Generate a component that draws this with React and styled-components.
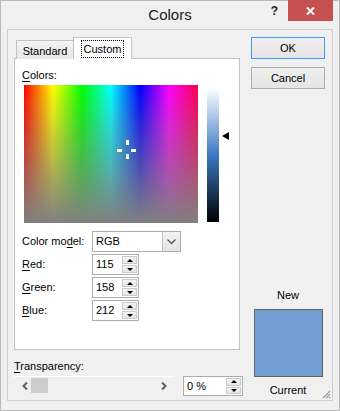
import React from "react";
import styled, {createGlobalStyle} from "styled-components";

const GlobalStyle = createGlobalStyle`
  body {
    margin: 0;
    background: #ffffff;
    font-family: "Liberation Sans", Arial, sans-serif;
    font-size: 11px;
    color: #000;
  }
`

const Window = styled.div`
  width: 340px;
  height: 411px;
  box-sizing: border-box;
  background: #f0f0f0;
  border: 1px solid #b9b9b9;
  display: flex;
  flex-direction: column;
`

const TitleBar = styled.div`
  height: 29px;
  margin-top: -1px;
  display: grid;
  grid-template-columns: 1fr auto 1fr;
  align-items: start;
`

const Title = styled.div`
  grid-column: 2;
  font-size: 15px;
  line-height: 30px;
  color: #1a1a1a;
`

const Controls = styled.div`
  display: flex;
  justify-content: flex-end;
  align-items: flex-start;
  padding-right: 6px;
`

const Help = styled.span`
  font-weight: bold;
  font-size: 12px;
  line-height: 22px;
  margin-right: 10px;
  color: #222;
`

const CloseButton = styled.div`
  width: 45px;
  height: 21px;
  background: #c75050;
  display: flex;
  align-items: center;
  justify-content: center;
`

const Client = styled.div`
  position: relative;
  flex: 1;
  margin: 0 6px 9px 6px;
  border: 1px solid #d0d0d0;
  padding: 7px 7px 0 6px;
  display: flex;
  gap: 8px;
`

const LeftColumn = styled.div`
  width: 229px;
  display: flex;
  flex-direction: column;
`

const RightColumn = styled.div`
  width: 75px;
  display: flex;
  flex-direction: column;
  gap: 8px;
`

const TabRow = styled.div`
  display: flex;
  align-items: flex-end;
  padding-left: 2px;
  margin-bottom: -1px;
  position: relative;
  z-index: 1;
`

const Tab = styled.div`
  box-sizing: border-box;
  width: ${p => p.$active ? 59 : 58}px;
  height: ${p => p.$active ? 22 : 19}px;
  margin-left: ${p => p.$active ? -1 : 0}px;
  border: 1px solid #c4c4c4;
  border-bottom: none;
  background: ${p => p.$active ? "#ffffff" : "linear-gradient(#f3f3f3, #e6e6e6)"};
  display: flex;
  align-items: center;
  justify-content: center;
  font-size: 11px;
  padding-top: ${p => p.$active ? 0 : 1}px;
`

const Focus = styled.span`
  border: 1px dotted #000;
  padding: 1px 2px;
  line-height: 14px;
`

const Panel = styled.div`
  box-sizing: border-box;
  width: 226px;
  height: 292px;
  border: 1px solid #c4c4c4;
  background: #ffffff;
  padding: 9px 0 0 7px;
  display: flex;
  flex-direction: column;
`

const Label = styled.div`
  line-height: 15px;
  white-space: nowrap;
`

const Key = styled.span`
  text-decoration: underline;
  text-underline-offset: 2px;
`

const PickerRow = styled.div`
  display: flex;
  margin: 2px 0 0 2px;
`

const Spectrum = styled.div`
  position: relative;
  width: 174px;
  height: 138px;
  background:
    linear-gradient(to bottom, rgba(128,128,128,0), #808080),
    linear-gradient(to right, #ff0000, #ffff00 16.7%, #00ff00 33.3%, #00ffff 50%, #0000ff 66.7%, #ff00ff 83.3%, #ff0050);
`

const Mark = styled.span`
  position: absolute;
  background: #ffffff;
  width: ${p => p.$w}px;
  height: ${p => p.$h}px;
  left: ${p => p.$x}px;
  top: ${p => p.$y}px;
`

const LumWrap = styled.div`
  position: relative;
  margin: 3px 0 0 9px;
  width: 22px;
`

const LumBar = styled.div`
  width: 12px;
  height: 134px;
  background: linear-gradient(#ffffff, rgb(60,121,195) 50%, #000000);
`

const Pointer = styled.span`
  position: absolute;
  left: 15px;
  width: 0;
  height: 0;
  border-top: 4px solid transparent;
  border-bottom: 4px solid transparent;
  border-right: 7px solid #000;
`

const Fields = styled.div`
  margin-top: 8px;
  display: flex;
  flex-direction: column;
  gap: 2px;
`

const Field = styled.div`
  display: grid;
  grid-template-columns: 70px auto;
  align-items: center;
  height: 21px;
`

const Select = styled.div`
  box-sizing: border-box;
  width: 89px;
  height: 21px;
  border: 1px solid #acacac;
  display: flex;
  background: #fff;
`

const SelectText = styled.span`
  flex: 1;
  padding-left: 3px;
  line-height: 19px;
`

const DropButton = styled.span`
  width: 17px;
  border-left: 1px solid #c4c4c4;
  background: linear-gradient(#f2f2f2, #e4e4e4);
  display: flex;
  align-items: center;
  justify-content: center;
`

const SpinBox = styled.div`
  box-sizing: border-box;
  width: ${p => p.$w}px;
  height: ${p => p.$h}px;
  border: 1px solid #acacac;
  background: #fff;
  display: flex;
  padding: 1px;
`

const SpinText = styled.span`
  flex: 1;
  padding-left: 2px;
  line-height: ${p => p.$h - 4}px;
`

const SpinButtons = styled.span`
  width: 15px;
  display: flex;
  flex-direction: column;
  gap: 1px;
`

const SpinHalf = styled.span`
  flex: 1;
  box-sizing: border-box;
  border: 1px solid #c9c9c9;
  background: linear-gradient(#f4f4f4, #e6e6e6);
  display: flex;
  align-items: center;
  justify-content: center;
`

const Tri = styled.span`
  width: 0;
  height: 0;
  border-left: 3px solid transparent;
  border-right: 3px solid transparent;
  ${p => p.$up ? "border-bottom: 3px solid #000;" : "border-top: 3px solid #000;"}
`

const TransLabel = styled(Label)`
  margin-top: 9px;
`

const ScrollRow = styled.div`
  margin-top: 2px;
  display: flex;
  gap: 9px;
  align-items: flex-start;
`

const Scrollbar = styled.div`
  box-sizing: border-box;
  width: 160px;
  height: 18px;
  border-top: 1px solid #ffffff;
  display: flex;
  align-items: center;
  padding: 0 4px 0 4px;
`

const ScrollArrow = styled.span`
  width: 13px;
  display: flex;
  justify-content: center;
`

const Thumb = styled.span`
  width: 17px;
  height: 15px;
  background: #cdcdcd;
`

const Track = styled.span`
  flex: 1;
`

const Button = styled.div`
  box-sizing: border-box;
  height: 22px;
  border: 1px solid ${p => p.$default ? "#3c9cff" : "#acacac"};
  background: linear-gradient(#efefef, #e5e5e5);
  display: flex;
  align-items: center;
  justify-content: center;
  font-size: 11px;
`

const Preview = styled.div`
  margin-top: auto;
  margin-bottom: 2px;
  display: flex;
  flex-direction: column;
  align-items: center;
  gap: 6px;
`

const Swatch = styled.div`
  box-sizing: border-box;
  width: 69px;
  height: 68px;
  border: 1px solid #646464;
  background: rgb(115,158,212);
`

const Grip = styled.svg`
  position: absolute;
  right: 1px;
  bottom: 1px;
`

function Spinner({value, w = 47, h = 21}) {
  return (
    <SpinBox $w={w} $h={h}>
      <SpinText $h={h}>{value}</SpinText>
      <SpinButtons>
        <SpinHalf><Tri $up /></SpinHalf>
        <SpinHalf><Tri /></SpinHalf>
      </SpinButtons>
    </SpinBox>
  );
}

export default function App() {
  const cx = 102, cy = 64;
  return (
    <>
      <GlobalStyle />
      <Window>
        <TitleBar>
          <Title>Colors</Title>
          <Controls>
            <Help>?</Help>
            <CloseButton>
              <svg width="9" height="8" viewBox="0 0 9 8">
                <path d="M1 0.5 L8 7.5 M8 0.5 L1 7.5" stroke="#fff" strokeWidth="2" />
              </svg>
            </CloseButton>
          </Controls>
        </TitleBar>

        <Client>
          <LeftColumn>
            <TabRow>
              <Tab>Standard</Tab>
              <Tab $active><Focus>Custom</Focus></Tab>
            </TabRow>
            <Panel>
              <Label><Key>C</Key>olors:</Label>
              <PickerRow>
                <Spectrum>
                  <Mark $w={3} $h={5} $x={cx} $y={cy - 9} />
                  <Mark $w={3} $h={5} $x={cx} $y={cy + 5} />
                  <Mark $w={5} $h={3} $x={cx - 9} $y={cy} />
                  <Mark $w={5} $h={3} $x={cx + 5} $y={cy} />
                </Spectrum>
                <LumWrap>
                  <LumBar />
                  <Pointer style={{top: 44}} />
                </LumWrap>
              </PickerRow>
              <Fields>
                <Field>
                  <Label>Color mo<Key>d</Key>el:</Label>
                  <Select>
                    <SelectText>RGB</SelectText>
                    <DropButton>
                      <svg width="9" height="6" viewBox="0 0 9 6">
                        <polyline points="0.5,0.5 4.5,4.5 8.5,0.5" fill="none" stroke="#555" strokeWidth="1.3" />
                      </svg>
                    </DropButton>
                  </Select>
                </Field>
                <Field>
                  <Label><Key>R</Key>ed:</Label>
                  <Spinner value="115" />
                </Field>
                <Field>
                  <Label><Key>G</Key>reen:</Label>
                  <Spinner value="158" />
                </Field>
                <Field>
                  <Label><Key>B</Key>lue:</Label>
                  <Spinner value="212" />
                </Field>
              </Fields>
            </Panel>

            <TransLabel><Key>T</Key>ransparency:</TransLabel>
            <ScrollRow>
              <Scrollbar>
                <ScrollArrow>
                  <svg width="6" height="8" viewBox="0 0 6 8">
                    <polyline points="5,0.5 1.5,4 5,7.5" fill="none" stroke="#606060" strokeWidth="2" />
                  </svg>
                </ScrollArrow>
                <Thumb />
                <Track />
                <ScrollArrow>
                  <svg width="6" height="8" viewBox="0 0 6 8">
                    <polyline points="1,0.5 4.5,4 1,7.5" fill="none" stroke="#606060" strokeWidth="2" />
                  </svg>
                </ScrollArrow>
              </Scrollbar>
              <Spinner value="0 %" w={60} h={20} />
            </ScrollRow>
          </LeftColumn>

          <RightColumn>
            <Button $default>OK</Button>
            <Button>Cancel</Button>
            <Preview>
              <Label>New</Label>
              <Swatch />
              <Label>Current</Label>
            </Preview>
          </RightColumn>

          <Grip width="9" height="9" viewBox="0 0 9 9">
            <path d="M8 1 L1 8 M8 4 L4 8 M8 7 L7 8" stroke="#a0a0a0" strokeWidth="1.2" />
          </Grip>
        </Client>
      </Window>
    </>
  );
}
